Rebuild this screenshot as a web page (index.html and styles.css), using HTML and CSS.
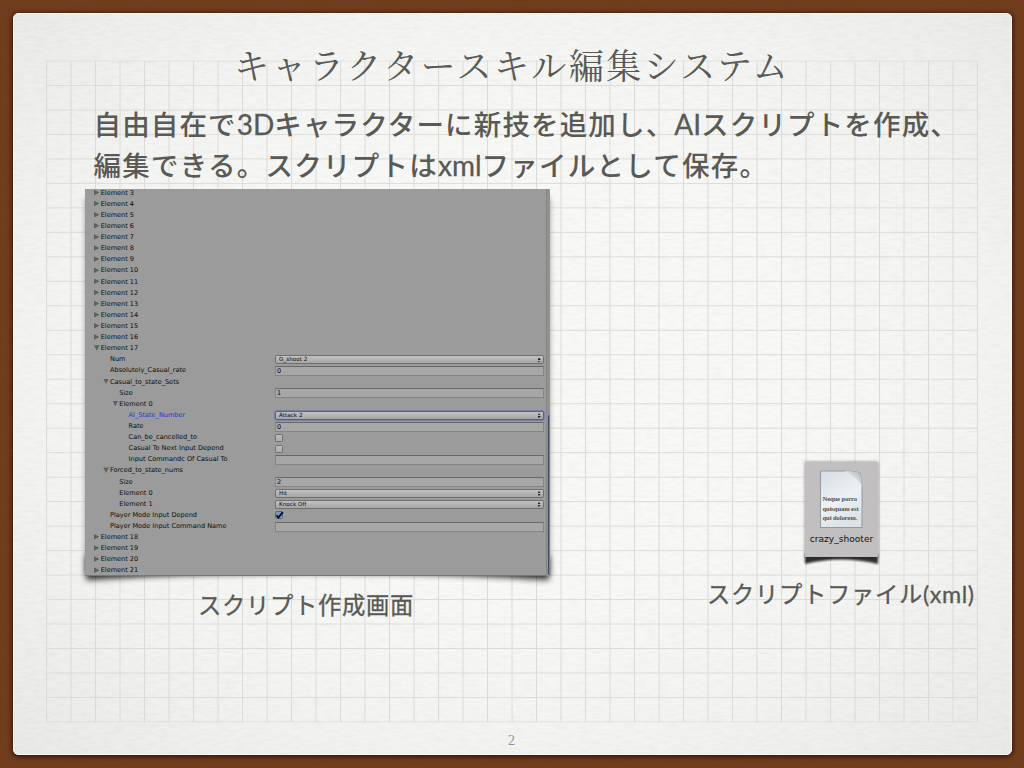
FILE: index.html
```html
<!DOCTYPE html>
<html lang="ja">
<head>
<meta charset="utf-8">
<title>キャラクタースキル編集システム</title>
<link rel="stylesheet" href="styles.css">
</head>
<body>
<svg class="texture" width="1024" height="768" aria-hidden="true">
  <filter id="wood" x="0" y="0" width="100%" height="100%"><feTurbulence type="fractalNoise" baseFrequency="0.03 0.4" numOctaves="3" seed="4"/><feColorMatrix values="0 0 0 0 0.15  0 0 0 0 0.05  0 0 0 0 0  0.9 0 0 0 -0.32"/></filter>
  <rect width="1024" height="768" filter="url(#wood)" opacity=".5"/>
</svg>
<main class="paper">
  <svg class="backdrop" width="999" height="742" aria-hidden="true">
    <defs>
      <filter id="grain" x="0" y="0" width="100%" height="100%" color-interpolation-filters="sRGB"><feTurbulence type="fractalNoise" baseFrequency="0.09 0.35" numOctaves="4" seed="9"/><feColorMatrix values="0 0 0 0 0.45  0 0 0 0 0.45  0 0 0 0 0.44  0.5 0 0 0 -0.18"/></filter>
      <pattern id="grid" x="33" y="47.5" width="24.5" height="24.48" patternUnits="userSpaceOnUse"><path d="M.5 0V24.48M0 .5H24.5" stroke="#dbdbd8" stroke-width="1.1"/></pattern>
    </defs>
    <rect width="999" height="742" filter="url(#grain)" opacity=".17"/>
    <rect x="33" y="47.5" width="932" height="662" fill="url(#grid)"/>
  </svg>
  <h1 class="title">キャラクタースキル編集システム</h1>
  <div class="lead">
    <p class="line line-one">自由自在で<span class="latin">3D</span>キャラクターに新技を追加し、<span class="latin">AI</span>スクリプトを作成、</p>
    <p class="line line-two">編集できる。スクリプトは<span class="latin">xml</span>ファイルとして保存。</p>
  </div>
  <div class="figures">
    <figure class="shot">
      <svg class="shade" width="505" height="60" aria-hidden="true"><filter id="b1" x="-10%" y="-50%" width="120%" height="200%"><feGaussianBlur stdDeviation="3"/></filter><path d="M21 20H484V44Q252 28 21 44Z" fill="#000" opacity=".8" filter="url(#b1)"/></svg>
      <div class="inspector">
        <div class="rows">
          <div class="row"><span class="label closed">Element 3</span></div>
          <div class="row"><span class="label closed">Element 4</span></div>
          <div class="row"><span class="label closed">Element 5</span></div>
          <div class="row"><span class="label closed">Element 6</span></div>
          <div class="row"><span class="label closed">Element 7</span></div>
          <div class="row"><span class="label closed">Element 8</span></div>
          <div class="row"><span class="label closed">Element 9</span></div>
          <div class="row"><span class="label closed">Element 10</span></div>
          <div class="row"><span class="label closed">Element 11</span></div>
          <div class="row"><span class="label closed">Element 12</span></div>
          <div class="row"><span class="label closed">Element 13</span></div>
          <div class="row"><span class="label closed">Element 14</span></div>
          <div class="row"><span class="label closed">Element 15</span></div>
          <div class="row"><span class="label closed">Element 16</span></div>
          <div class="row"><span class="label open">Element 17</span></div>
          <div class="row"><span class="label in1">Num</span><span class="select">G_shoot 2</span></div>
          <div class="row"><span class="label in1">Absolutely_Casual_rate</span><span class="input">0</span></div>
          <div class="row"><span class="label in1 open">Casual_to_state_Sets</span></div>
          <div class="row"><span class="label in2">Size</span><span class="input">1</span></div>
          <div class="row"><span class="label in2 open">Element 0</span></div>
          <div class="row"><span class="label in3 active">AI_State_Number</span><span class="select focus">Attack 2</span></div>
          <div class="row"><span class="label in3">Rate</span><span class="input">0</span></div>
          <div class="row"><span class="label in3">Can_be_cancelled_to</span><span class="check"></span></div>
          <div class="row"><span class="label in3">Casual To Next Input Depend</span><span class="check"></span></div>
          <div class="row"><span class="label in3">Input Commandc Of Casual To</span><span class="input"></span></div>
          <div class="row"><span class="label in1 open">Forced_to_state_nums</span></div>
          <div class="row"><span class="label in2">Size</span><span class="input">2</span></div>
          <div class="row"><span class="label in2">Element 0</span><span class="select">Hit</span></div>
          <div class="row"><span class="label in2">Element 1</span><span class="select">Knock Off</span></div>
          <div class="row"><span class="label in1">Player Mode Input Depend</span><span class="check checked"><svg width="9" height="9" viewBox="0 0 9 9"><path d="M1.5 4.3L3.4 6.6L7.8 .9" fill="none" stroke="#080a10" stroke-width="1.7"/></svg></span></div>
          <div class="row"><span class="label in1">Player Mode Input Command Name</span><span class="input"></span></div>
          <div class="row"><span class="label closed">Element 18</span></div>
          <div class="row"><span class="label closed">Element 19</span></div>
          <div class="row"><span class="label closed">Element 20</span></div>
          <div class="row"><span class="label closed">Element 21</span></div>
        </div>
        <div class="scroll"><div class="thumb"></div></div>
      </div>
      <figcaption class="caption">スクリプト作成画面</figcaption>
    </figure>
    <figure class="file">
      <div class="tile-wrap">
        <svg class="tile-shade" width="94" height="40" aria-hidden="true"><filter id="b2" x="-10%" y="-50%" width="120%" height="200%"><feGaussianBlur stdDeviation="1.2"/></filter><path d="M10 20H83V30Q46 21 10 30Z" fill="#000" opacity=".8" filter="url(#b2)"/></svg>
        <div class="tile">
          <div class="doc">
            <svg class="doc-page" width="46" height="60" viewBox="0 0 46 60" aria-hidden="true">
              <defs><linearGradient id="pg" x1="0" y1="0" x2=".4" y2="1"><stop offset="0" stop-color="#d5dde3"/><stop offset=".6" stop-color="#edf1f3"/><stop offset="1" stop-color="#dce3e7"/></linearGradient>
              <linearGradient id="curl" x1="0" y1="1" x2="1" y2="0"><stop offset=".3" stop-color="#f6f9fa"/><stop offset="1" stop-color="#a5b2bc"/></linearGradient></defs>
              <path d="M1.500 2H25Q37 2.500 41 4Q42.500 10 43 19V58.500H1.500Z" fill="url(#pg)" stroke="#8e9aa2" stroke-width="1"/>
              <path d="M25 2Q37 2.500 41 4Q42.500 10 43 19Q39 8 25 2Z" fill="url(#curl)"/>
            </svg>
            <div class="doc-text">Neque porro<br>quisquam est<br>qui dolorem.</div>
          </div>
          <div class="filename">crazy_shooter</div>
        </div>
      </div>
      <figcaption class="caption">スクリプトファイル<span class="cap-latin">(xml)</span></figcaption>
    </figure>
  </div>
  <footer class="page-number">2</footer>
</main>
</body>
</html>
```
FILE: styles.css
```css
* { box-sizing: border-box; }
body {
  margin: 0;
  width: 1024px;
  height: 768px;
  padding: 13px 12px 13px 13px;
  overflow: hidden;
  background: #713d20;
  color: #595955;
  font-family: Lato, "Noto Sans CJK JP", sans-serif;
}
h1, p, figure { margin: 0; }
.texture { position: absolute; left: 0; top: 0; }
.paper {
  position: relative;
  display: flex;
  flex-direction: column;
  height: 742px;
  border-radius: 6px;
  background: radial-gradient(ellipse at 50% 48%, #f8f8f6 40%, #f4f4f2 65%, #e9e9e7 100%);
  box-shadow: 0 1px 5px 1px rgba(35, 8, 0, .75);
}
.backdrop { position: absolute; left: 0; top: 0; border-radius: 6px; box-shadow: inset 0 0 0 1px #fafaf8; }
.title {
  position: relative;
  height: 91px;
  padding: 25px 0 0 221px;
  font: 400 35px/52px "Noto Serif CJK JP", "Noto Sans CJK JP", serif;
  letter-spacing: 2.5px;
  white-space: nowrap;
}
.lead { position: relative; height: 85px; padding-left: 80.5px; }
.line {
  height: 41px;
  font-size: 27.5px;
  font-weight: 500;
  line-height: 40px;
  letter-spacing: 1.15px;
  white-space: nowrap;
}
.line-two { letter-spacing: 1.25px; }
.latin { font-family: Lato, sans-serif; font-weight: 400; font-size: 28px; letter-spacing: 0; -webkit-text-stroke: .3px #595955; }
.figures { position: relative; display: flex; height: 536px; padding-left: 72px; }
.shot { position: relative; width: 465px; }
.shade { position: absolute; left: -20px; top: 347px; }
.inspector {
  position: relative;
  display: flex;
  height: 387px;
  overflow: hidden;
  background: #9b9b9b;
  box-shadow: inset 0 -1px #777;
  color: #0c0c0c;
  font: 6.55px/11.1px "DejaVu Sans", sans-serif;
}
.shot::before {
  content: "";
  position: absolute;
  inset: 8px 1px auto 1px;
  height: 375px;
  box-shadow: 0 1px 6px rgba(0, 0, 0, .5);
}
.rows { width: 461px; margin-top: -1.3px; }
.row { display: flex; align-items: center; height: 11.11px; }
.label { position: relative; flex: none; width: 190px; padding-left: 15.7px; white-space: nowrap; }
.in1 { padding-left: 25px; }
.in2 { padding-left: 34.3px; }
.in3 { padding-left: 43.6px; }
.active { color: #2438d0; }
.open::before, .closed::before {
  content: "";
  display: inline-block;
  position: relative;
  top: .5px;
  margin-right: 1.2px;
  margin-left: -6.7px;
  width: 5.5px;
  height: 5.5px;
  background: #606060;
  clip-path: polygon(0 0, 100% 50%, 0 100%);
}
.open::before { clip-path: polygon(0 0, 100% 0, 50% 100%); }
.input, .select { width: 269px; padding-left: 1px; }
.input { height: 10px; line-height: 8.5px; border: 1px solid #858585; border-top-color: #686868; background: #a7a7a7; }
.select {
  position: relative;
  height: 9px;
  padding-left: 3px;
  border: 1px solid #707070;
  border-radius: 2px;
  background: linear-gradient(#c2c2c2, #a5a5a5);
  font-size: 5.7px;
  line-height: 7px;
}
.select::after {
  content: "";
  position: absolute;
  right: 2.5px;
  top: 1.2px;
  width: 3px;
  height: 5px;
  background: linear-gradient(#222 40%, transparent 40% 60%, #222 60%);
  clip-path: polygon(50% 0, 100% 40%, 100% 60%, 50% 100%, 0 60%, 0 40%);
}
.focus { border-color: #4d5db2; box-shadow: 0 0 0 .5px #5967ad; }
.check {
  display: flex;
  width: 8px;
  height: 8px;
  border: 1px solid #6e6e6e;
  border-radius: 1.5px;
  background: linear-gradient(#bdbdbd, #acacac);
}
.checked { background: #8296b8; border-color: #53658c; }
.checked svg { flex: none; margin: -1.5px 0 0 -1px; }
.scroll { width: 4px; padding: 226px 0 0 1px; background: #929292; border-left: 1px solid #858585; }
.thumb { height: 160px; border-left: 1px solid #3d4b60; border-radius: 2px 0 0 2px; background: #72839b; }
.caption { position: relative; font-size: 23.3px; font-weight: 400; line-height: 34px; letter-spacing: .7px; white-space: nowrap; -webkit-text-stroke: .3px #595955; }
.shot .caption { padding: 12px 0 0 113px; }
.file { width: 270px; padding: 273px 0 0 157px; }
.tile-wrap { position: relative; width: 73px; margin-left: 98px; }
.file .caption { margin-top: 20px; }
.cap-latin { letter-spacing: .6px; }
.tile-shade { position: absolute; left: -10px; top: 72px; }
.tile {
  position: relative;
  display: flex;
  flex-direction: column;
  align-items: center;
  height: 95px;
  padding-top: 7px;
  background: #c2bfc0;
  box-shadow: 0 0 3px rgba(0, 0, 0, .45);
}
.doc { position: relative; width: 46px; height: 60px; }
.doc-text {
  position: absolute;
  left: 4px;
  top: 25px;
  color: #4b5157;
  font: bold 6.6px/9.7px "Liberation Serif", serif;
  white-space: nowrap;
  letter-spacing: -.1px;
}
.filename { margin-top: 4px; color: #111; font: 9.1px/12px "DejaVu Sans", sans-serif; white-space: nowrap; }
.page-number {
  position: relative;
  padding-right: 2px;
  height: 30px;
  text-align: center;
  color: #92928e;
  font: 14px/32px "Liberation Serif", serif;
}
```
